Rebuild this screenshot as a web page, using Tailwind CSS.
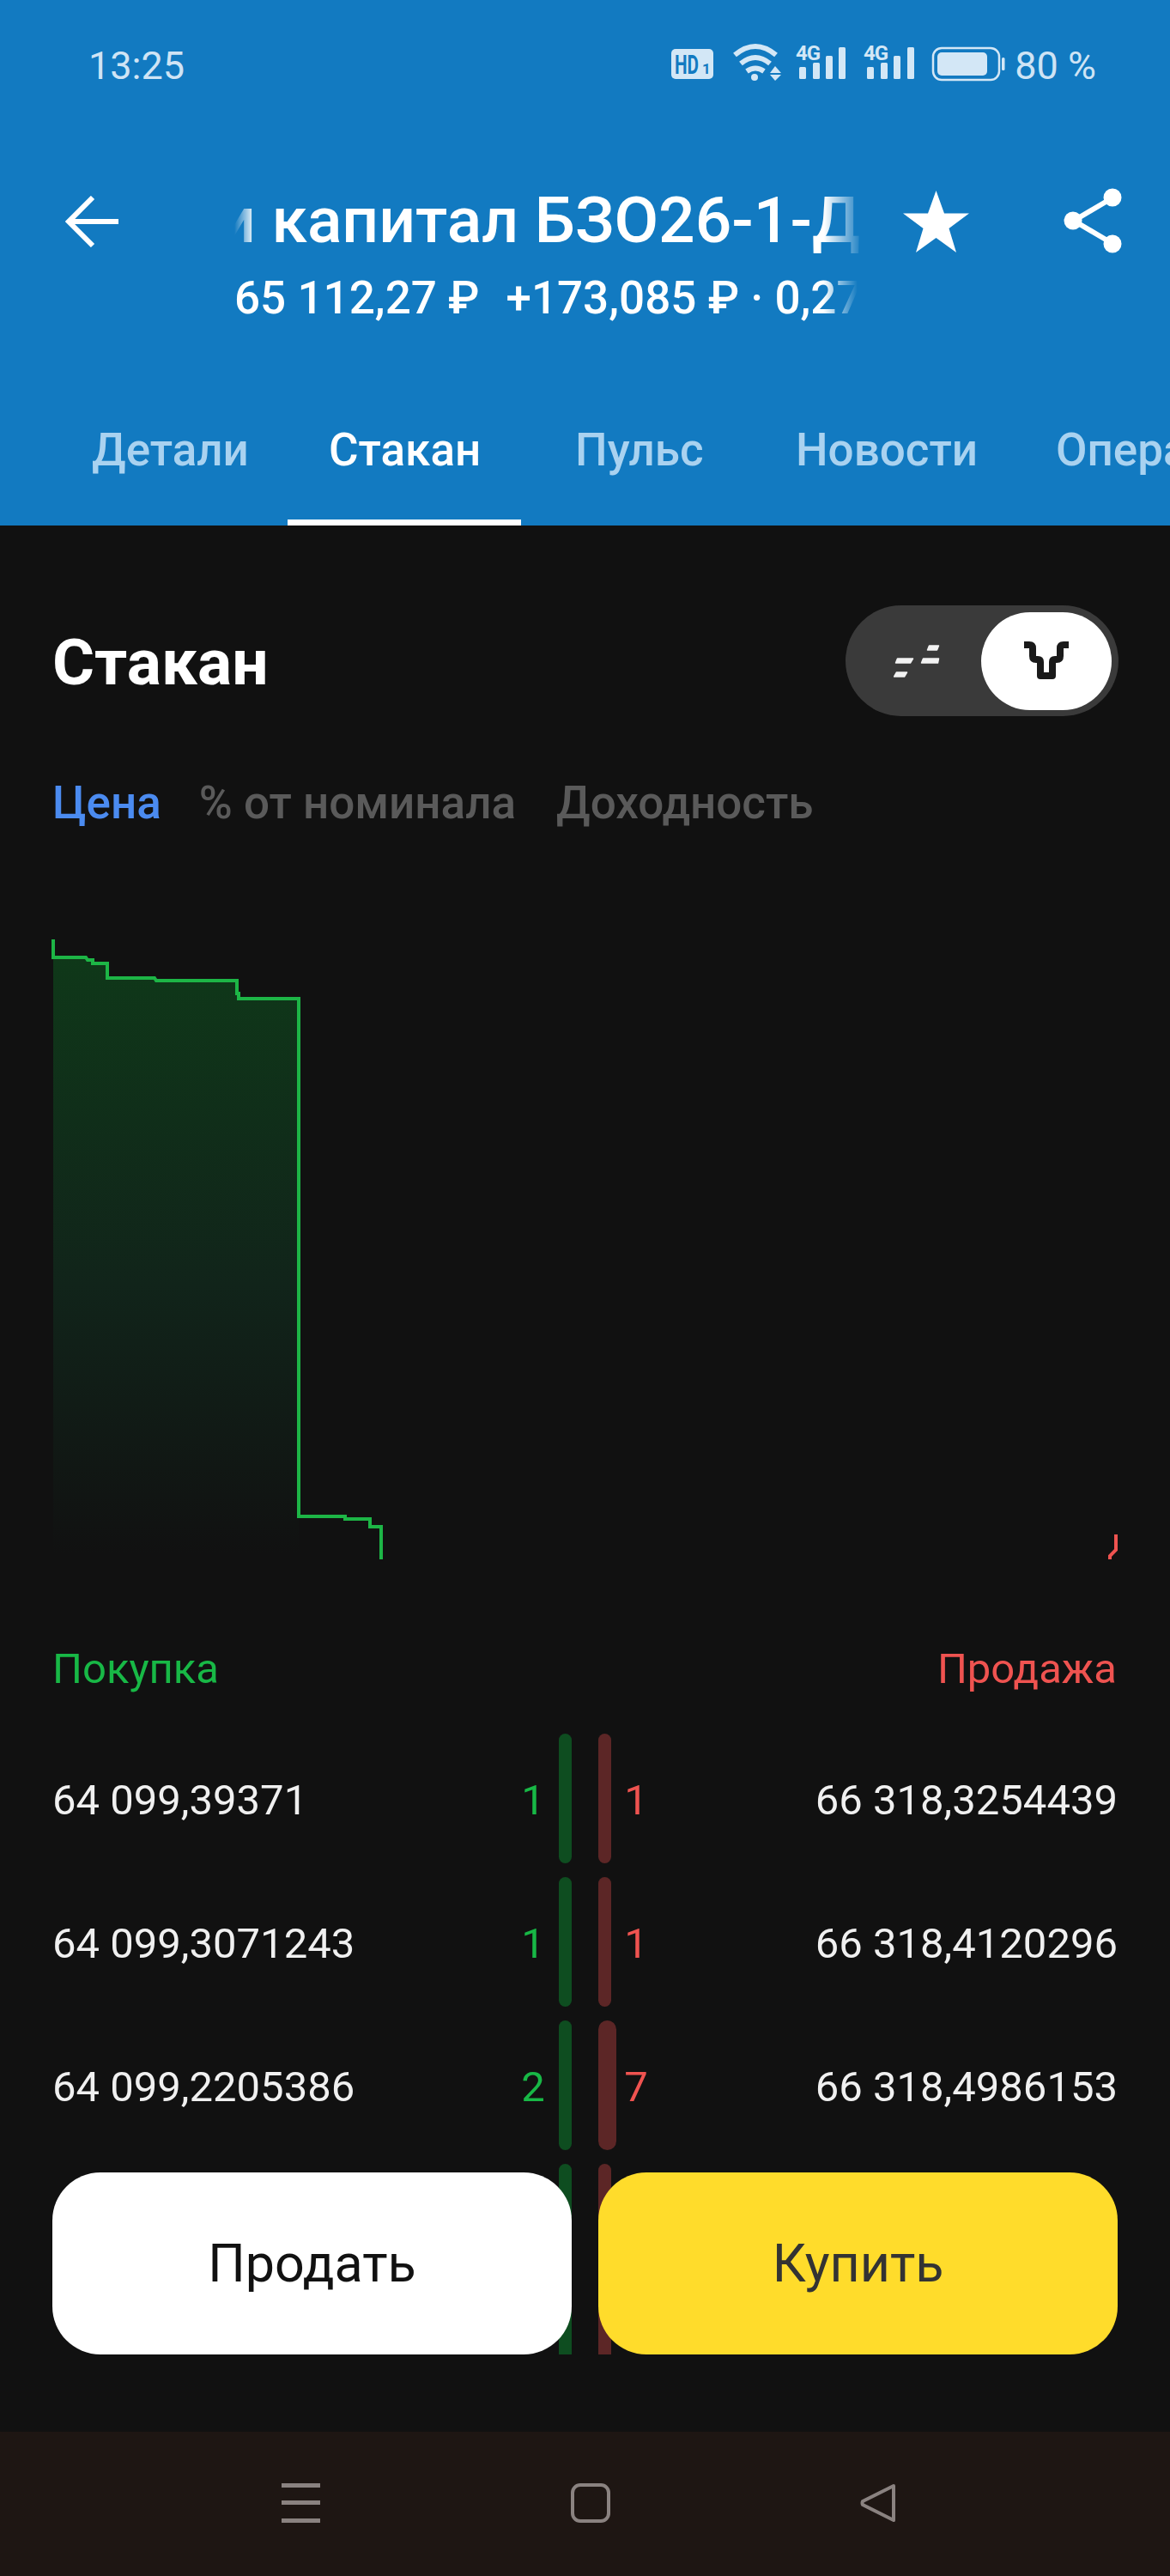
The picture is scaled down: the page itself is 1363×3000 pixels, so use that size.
<!DOCTYPE html>
<html lang="ru">
<head>
<meta charset="utf-8">
<script src="https://cdn.jsdelivr.net/npm/@tailwindcss/browser@4"></script>
</head>
<body class="bg-[#111111] font-['Roboto',sans-serif]">
<div class="relative w-[1363px] h-[3000px] flex flex-col overflow-hidden">

  <header class="h-[612px] bg-[#127ac1] text-white flex flex-col shrink-0">
    <div class="h-[150px] pt-[3px] flex items-center justify-between pl-[103px] pr-[86px] text-[#cfe4f5] text-[45px] leading-none">
      <span>13:25</span>
      <div class="flex items-center -mt-[3px]">
        <svg class="w-[400px] h-[60px]" viewBox="784 47 400 60" fill="#d3e7f6">
          <rect x="784" y="59" width="49" height="35" rx="5"/>
          <text x="788" y="88" font-family="Roboto" font-weight="700" font-size="31" fill="#127ac1" textLength="28" lengthAdjust="spacingAndGlyphs">HD</text>
          <text x="820" y="88" font-family="Roboto" font-weight="700" font-size="17" fill="#127ac1">1</text>
          <g fill="none" stroke="#d3e7f6" stroke-width="6" stroke-linecap="butt">
            <path d="M858 66Q882 46 906 66"/>
            <path d="M865 76Q882 62 899 76"/>
            <path d="M872 85Q882 78 892 85"/>
          </g>
          <circle cx="881" cy="92" r="4"/>
          <path d="M905 79l7 8h-13zM905 96l7-7h-13z"/>
          <text x="929" y="72" font-family="Roboto" font-weight="700" font-size="24" letter-spacing="-1">4G</text>
          <rect x="933" y="80" width="8" height="14" rx="1.5"/>
          <rect x="949" y="75" width="8" height="19" rx="1.5"/>
          <rect x="964" y="67" width="8" height="27" rx="1.5"/>
          <rect x="979" y="57" width="8" height="37" rx="1.5"/>
          <text x="1008" y="72" font-family="Roboto" font-weight="700" font-size="24" letter-spacing="-1">4G</text>
          <rect x="1012" y="80" width="8" height="14" rx="1.5"/>
          <rect x="1028" y="75" width="8" height="19" rx="1.5"/>
          <rect x="1043" y="67" width="8" height="27" rx="1.5"/>
          <rect x="1059" y="57" width="8" height="37" rx="1.5"/>
          <rect x="1089" y="58" width="77" height="37" rx="10" fill="none" stroke="#d3e7f6" stroke-width="2.5"/>
          <rect x="1094" y="63" width="58" height="27" rx="5"/>
          <rect x="1169" y="69" width="3.5" height="15" rx="1.5"/>
        </svg>
        <span class="mt-[3px] text-[#cfe4f5]">80 %</span>
      </div>
    </div>

    <div class="mt-[61px] flex items-start h-[181px] pl-[76px]">
      <svg class="w-[62px] h-[60px] mt-[17px] shrink-0" viewBox="0 0 62 60" fill="none" stroke="#fff" stroke-width="6">
        <path d="M32 2 4 30l28 28M4 30h58"/>
      </svg>
      <div class="ml-[135px] w-[732px] shrink-0">
        <div class="overflow-hidden whitespace-nowrap h-[90px] leading-[90px] text-[75px] font-medium [mask-image:linear-gradient(90deg,transparent_0,black_24px,black_calc(100%-45px),transparent_100%)]">
          <span class="inline-block -ml-[18px]">и капитал БЗО26-1-Д</span>
        </div>
        <div class="overflow-hidden whitespace-nowrap h-[90px] leading-[90px] w-[726px] text-[53px] font-medium mt-[1px] [mask-image:linear-gradient(90deg,black_0,black_calc(100%-40px),transparent_100%)]">65 112,27 ₽<span class="ml-[31px]">+173,085 ₽ · 0,27</span></div>
      </div>
      <svg class="ml-[47px] mt-[11px] w-[77px] h-[72px] shrink-0" viewBox="0 0 77 72" fill="#fff">
        <path d="M38.5 0 48 26.500h29L53.500 44 62 72 38.500 55 15 72l8.500-28L0 26.500h29z"/>
      </svg>
      <svg class="ml-[110px] mt-[8px] w-[68px] h-[76px] shrink-0" viewBox="0 0 68 76" fill="#fff" stroke="#fff">
        <path d="M56 12 12 38l44 26" fill="none" stroke-width="6"/>
        <circle cx="57" cy="11" r="10.500" stroke="none"/>
        <circle cx="11" cy="38" r="10.500" stroke="none"/>
        <circle cx="57" cy="65" r="10.500" stroke="none"/>
      </svg>
    </div>

    <nav class="mt-auto flex h-[128px] pl-[59px] text-[53px] font-medium text-[#a9d2f0] whitespace-nowrap overflow-hidden">
      <a class="px-[48px] pt-[1px] w-[276px] shrink-0">Детали</a>
      <a class="px-[48px] pt-[1px] w-[272px] shrink-0 text-white border-b-[7px] border-white">Стакан</a>
      <a class="px-[48px] pt-[1px] ml-[15px] w-[246px] shrink-0">Пульс</a>
      <a class="px-[48px] pt-[1px] ml-[11px] w-[303px] shrink-0">Новости</a>
      <a class="px-[48px] pt-[1px] shrink-0">Операции</a>
    </nav>
  </header>

  <main class="relative flex-1 bg-[#111111] px-[61px] text-white">
    <div class="flex items-center justify-between pt-[93px]">
      <h1 class="text-[75px] font-bold leading-none mt-[3px]">Стакан</h1>
      <div class="w-[318px] h-[129px] rounded-full bg-[#3a3a3a] flex items-center justify-between pl-[56px] pr-[8px] -mr-[1px]">
        <svg class="w-[54px] h-[40px]" viewBox="1041 750 54 40" fill="#f2f2f2" stroke="#f2f2f2" stroke-width="1.500" stroke-linejoin="round">
          <path d="M1045.500 767h18l-3 5h-17zM1044.500 783h12l-3 5h-12zM1075.500 767h18l-1 5h-19zM1082.500 752h11l-2 5h-11z"/>
        </svg>
        <div class="w-[152px] h-[114px] rounded-full bg-white flex items-center justify-center">
          <svg class="w-[56px] h-[48px]" viewBox="1191 746 56 46" fill="none" stroke="#1a1a1a" stroke-width="8" stroke-linejoin="round">
            <path d="M1193 750h6q4 0 4 4v9q0 4 4 4h2q3 0 3 3v16h14v-16q0-3 3-3h2q4 0 4-4v-9q0-4 4-4h6"/>
          </svg>
        </div>
      </div>
    </div>

    <div class="mt-[75px] flex text-[53px] font-medium leading-none text-[#5a5a5a]">
      <span class="text-[#4b8bf0]">Цена</span>
      <span class="ml-[44px]">% от номинала</span>
      <span class="ml-[47px]">Доходность</span>
    </div>

    <svg class="absolute left-0 top-[468px] w-[1363px] h-[750px]" viewBox="0 1080 1363 750" fill="none">
      <defs>
        <linearGradient id="bidFill" x1="0" y1="0" x2="0" y2="1">
          <stop offset="0" stop-color="#0f3819"/>
          <stop offset="0.55" stop-color="#11241a"/>
          <stop offset="1" stop-color="#111111"/>
        </linearGradient>
      </defs>
      <path d="M62 1115H100L102 1118H108V1122H125V1139H180L182 1142H276V1157H278V1163H348V1810H62Z" fill="url(#bidFill)"/>
      <path d="M62 1094V1115H100L102 1118H108V1122H125V1139H180L182 1142H276V1157H278V1163H348V1766H402V1769H431V1778H444V1816" stroke="#1db546" stroke-width="4"/>
      <path d="M1300 1787V1805L1293 1812V1816" stroke="#ef5350" stroke-width="4"/>
    </svg>

    <div class="absolute left-[61px] right-[62px] top-[1307px] flex justify-between text-[49px] leading-none">
      <span class="text-[#18b846]">Покупка</span>
      <span class="text-[#ef5350]">Продажа</span>
    </div>

    <div class="absolute left-[61px] top-[1407px] w-[1241px] h-[723px] overflow-hidden text-[49px] text-[#f0f0f0]">
      <div class="flex h-[167px] items-start">
        <div class="flex-1 flex items-center h-[151px]">
          <span class="flex-1 pt-[4px]">64 099,39371</span>
          <span class="w-[50px] pt-[4px] text-center text-[#18b846] mr-[5px]">1</span>
          <span class="w-[15px] h-full rounded-full bg-[#0e4d20]"></span>
        </div>
        <div class="w-[31px]"></div>
        <div class="flex-1 flex items-center h-[151px]">
          <span class="w-[15px] h-full rounded-full bg-[#5c2626]"></span>
          <span class="w-[50px] pt-[4px] text-center text-[#ef5350] ml-[4px]">1</span>
          <span class="flex-1 pt-[4px] text-right">66 318,3254439</span>
        </div>
      </div>
      <div class="flex h-[167px] items-start">
        <div class="flex-1 flex items-center h-[151px]">
          <span class="flex-1 pt-[4px]">64 099,3071243</span>
          <span class="w-[50px] pt-[4px] text-center text-[#18b846] mr-[5px]">1</span>
          <span class="w-[15px] h-full rounded-full bg-[#0e4d20]"></span>
        </div>
        <div class="w-[31px]"></div>
        <div class="flex-1 flex items-center h-[151px]">
          <span class="w-[15px] h-full rounded-full bg-[#5c2626]"></span>
          <span class="w-[50px] pt-[4px] text-center text-[#ef5350] ml-[4px]">1</span>
          <span class="flex-1 pt-[4px] text-right">66 318,4120296</span>
        </div>
      </div>
      <div class="flex h-[167px] items-start">
        <div class="flex-1 flex items-center h-[151px]">
          <span class="flex-1 pt-[4px]">64 099,2205386</span>
          <span class="w-[50px] pt-[4px] text-center text-[#18b846] mr-[5px]">2</span>
          <span class="w-[15px] h-full rounded-full bg-[#0e4d20]"></span>
        </div>
        <div class="w-[31px]"></div>
        <div class="flex-1 flex items-center h-[151px]">
          <span class="w-[21px] h-full rounded-full bg-[#5c2626]"></span>
          <span class="w-[50px] pt-[4px] text-center text-[#ef5350] -ml-[2px]">7</span>
          <span class="flex-1 pt-[4px] text-right">66 318,4986153</span>
        </div>
      </div>
      <div class="flex h-[167px] items-start">
        <div class="flex-1 flex justify-end h-[151px]"><span class="w-[15px] h-full rounded-full bg-[#0e4d20]"></span></div>
        <div class="w-[31px]"></div>
        <div class="flex-1 flex h-[151px]"><span class="w-[15px] h-full rounded-full bg-[#5c2626]"></span></div>
      </div>
      <div class="flex h-[167px] items-start">
        <div class="flex-1 flex justify-end h-[151px]"><span class="w-[15px] h-full rounded-full bg-[#0e4d20]"></span></div>
        <div class="w-[31px]"></div>
        <div class="flex-1 flex h-[151px]"><span class="w-[15px] h-full rounded-full bg-[#5c2626]"></span></div>
      </div>
    </div>

    <div class="absolute left-[61px] top-[1918px] flex gap-[31px] text-[61px] leading-none">
      <button class="w-[605px] h-[212px] rounded-[56px] bg-white text-[#111111]">Продать</button>
      <button class="w-[605px] h-[212px] rounded-[56px] bg-[#ffdc2b] text-[#333333]">Купить</button>
    </div>
  </main>

  <footer class="h-[168px] shrink-0 bg-[#1e1613] flex items-center pl-[328px] pb-[3px]">
    <div class="w-[45px] h-[46px] flex flex-col justify-between">
      <span class="h-[5px] bg-[#8a8280]"></span>
      <span class="h-[5px] bg-[#8a8280]"></span>
      <span class="h-[5px] bg-[#8a8280]"></span>
    </div>
    <div class="ml-[292px] w-[46px] h-[46px] rounded-[11px] border-[4px] border-[#8a8280]"></div>
    <svg class="ml-[291px] w-[42px] h-[46px]" viewBox="0 0 42 46" fill="none" stroke="#8a8280" stroke-width="4" stroke-linejoin="round">
      <path d="M39 3 3 21q-1 2 0 4l36 18z"/>
    </svg>
  </footer>
</div>
</body>
</html>
